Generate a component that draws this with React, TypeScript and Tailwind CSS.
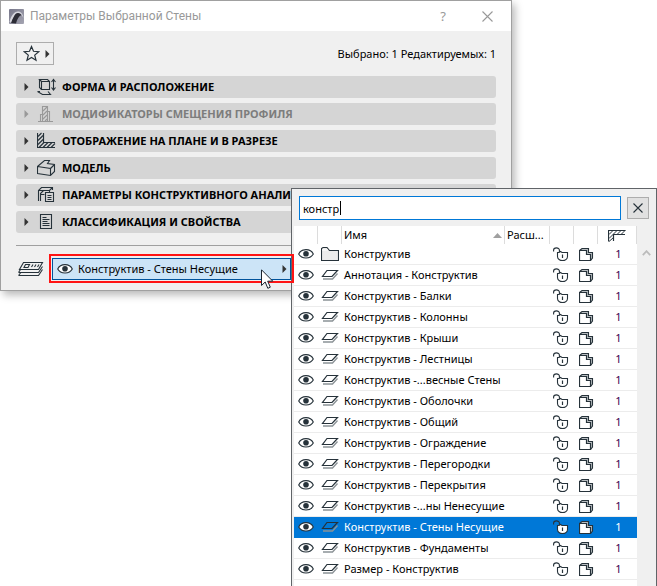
import type { ReactNode } from 'react';

const INK = '#26323a';

function Arrow({ className }: { className: string }) {
  return (
    <svg className={className} width="5" height="8" viewBox="0 0 5 8" fill="currentColor" aria-hidden="true">
      <path d="M0.500 0L4.500 4L0.500 8Z" />
    </svg>
  );
}

function AppLogo() {
  return (
    <svg width="15" height="15" viewBox="0 0 15 15" aria-hidden="true">
      <defs>
        <linearGradient id="logo" x1="0" y1="0" x2="1" y2="1">
          <stop offset="0" stopColor="#77778a" />
          <stop offset="1" stopColor="#a5a5b2" />
        </linearGradient>
      </defs>
      <rect width="15" height="15" rx="1" fill="url(#logo)" />
      <path d="M0.500 13C2 7 5 2.500 9 2.500C12 2.500 14 5 14.500 9C12.500 5 11 4 9 4C6 4 4 9 2.500 14Z" fill="#d6d6de" />
      <path d="M2 14C4 9 6 4 9 4C10.500 4 11.500 5 12.500 6C10 7 8 10 7 14.500Z" fill="#2c2c36" />
    </svg>
  );
}

function Star() {
  return (
    <svg width="17" height="17" viewBox="0 0 17 17" fill="none" stroke={INK} strokeWidth="1.200" strokeLinejoin="miter" aria-hidden="true">
      <path d="M8.500 1.500L10.500 6.300L15.700 6.700L11.700 10.100L13 15.200L8.500 12.400L4 15.200L5.300 10.100L1.300 6.700L6.500 6.300Z" />
    </svg>
  );
}

function Frame18({ children }: { children: ReactNode }) {
  return (
    <svg className="shrink-0" width="20" height="18" viewBox="0 0 20 18" fill="none" stroke="currentColor" strokeWidth="1.100" aria-hidden="true">
      {children}
    </svg>
  );
}

const shapeIcon = (
  <Frame18>
    <path d="M4.500 3.500H12.500V11.500H4.500ZM4.500 3.500L2.500 1.500H10.500L12.500 3.500M2.500 1.500V9.500L4.500 11.500" />
    <path d="M0.500 13.500H3M11 13.500L13.500 16.500H5.500L0.500 13.500" />
    <path d="M16.500 2V12M14.500 4L16.500 1.500L18.500 4M14.500 9.500L16.500 12L18.500 9.500" />
  </Frame18>
);
const profileIcon = (
  <Frame18>
    <path d="M5.500 16V1.500H10.500V16M3.500 16V9.500H5.500M10.500 6.500H12.500V16M1 16.500H16M6 6L10 2M6 10L10 6M6 14L10 10M8 16L10 14" />
  </Frame18>
);
const planIcon = (
  <Frame18>
    <path d="M0.500 1V15.500H18M6.500 1V10.500H18" strokeWidth="1.200" />
    <path d="M1 4.500L4.500 1M1 8.500L6 3.500M1 12.500L6 7.500M2 15.500L7 10.500M6 15.500L11 10.500M10 15.500L15 10.500M14 15.500L18 11.500" />
  </Frame18>
);
const modelIcon = (
  <Frame18>
    <path d="M0.500 7.500L7.500 1.500L12.500 1.500L10.500 4.500L17.500 5.500V12.500L13.500 16.500L0.500 14.500ZM0.500 7.500L13.500 9.500V16.500M13.500 9.500L17.500 5.500" />
  </Frame18>
);
const analysisIcon = (
  <Frame18>
    <path d="M1.500 15V4.500L4.500 1.500H15.500V4M1.500 4.500H12.500L15.500 1.500M3.500 15V7.500L6.500 4.500M3.500 8.500H7.500M12.500 4.500V6" />
    <path d="M8.500 6.500H16.500V15.500H8.500ZM10.500 9.500H14.500M10.500 11.500H14.500M10.500 13.500H14.500" />
  </Frame18>
);
const classIcon = (
  <Frame18>
    <path d="M3.500 1.500H14.500V15.500H3.500ZM5.500 4.500H9.500M5.500 6.500H12.500M5.500 8.500H10.500M5.500 10.500H12.500M5.500 12.500H12.500" />
  </Frame18>
);

const sections = [
  { title: 'ФОРМА И РАСПОЛОЖЕНИЕ', icon: shapeIcon, disabled: false },
  { title: 'МОДИФИКАТОРЫ СМЕЩЕНИЯ ПРОФИЛЯ', icon: profileIcon, disabled: true },
  { title: 'ОТОБРАЖЕНИЕ НА ПЛАНЕ И В РАЗРЕЗЕ', icon: planIcon, disabled: false },
  { title: 'МОДЕЛЬ', icon: modelIcon, disabled: false },
  { title: 'ПАРАМЕТРЫ КОНСТРУКТИВНОГО АНАЛИЗА', icon: analysisIcon, disabled: false },
  { title: 'КЛАССИФИКАЦИЯ И СВОЙСТВА', icon: classIcon, disabled: false },
];

function Eye() {
  return (
    <svg className="mx-auto block shrink-0" width="16" height="12" viewBox="0 0 16 12" aria-hidden="true">
      <path d="M0.700 6C3.500 0.200 12.500 0.200 15.300 6C12.500 11.300 3.500 11.300 0.700 6Z" fill="#fff" stroke={INK} strokeWidth="1.100" />
      <circle cx="8" cy="5.800" r="2.800" fill={INK} />
    </svg>
  );
}

function LayerIcon() {
  return (
    <svg className="mx-auto block" width="18" height="12" viewBox="0 0 18 12" fill="none" aria-hidden="true">
      <path d="M2 10H11.500L16.500 4.500" stroke="#8b9296" strokeWidth="1.400" />
      <path d="M6 1.500H16.500L11 7.500H1.500Z" stroke={INK} strokeWidth="1.200" />
    </svg>
  );
}

function FolderIcon() {
  return (
    <svg className="mx-auto block" width="18" height="16" viewBox="0 0 18 16" aria-hidden="true">
      <path d="M0.500 14.500V2.500L2 1.500H6L8.500 4.500H17.500V14.500Z" fill="#ececec" stroke={INK} strokeWidth="1.100" />
      <path d="M1 4H7" fill="none" stroke="#fff" />
    </svg>
  );
}

function LockIcon() {
  return (
    <svg className="block" width="16" height="15" viewBox="0 0 16 15" aria-hidden="true">
      <path d="M0.600 4.500V3C0.600 0.200 6.400 0.200 6.400 3V5" fill="none" stroke={INK} strokeWidth="1.100" />
      <path d="M4.500 5.500H6L7.500 4.500L9 5.500H14.500V9.500C14.500 12 12 13.500 9.500 13.500C7 13.500 4.500 12 4.500 9.500Z" fill="#fff" stroke={INK} strokeWidth="1.100" />
      <path d="M9.500 7.500V11" stroke={INK} strokeWidth="1.200" />
    </svg>
  );
}

function SolidIcon() {
  return (
    <svg className="mx-auto block" width="15" height="14" viewBox="0 0 15 14" stroke={INK} aria-hidden="true">
      <path d="M0.500 3.500L3 1.500H9.500V5.500H13.500V11L11.500 13.500H0.500Z" fill="#b9bec1" strokeWidth="1.100" />
      <path d="M0.500 3.500H7.500V7.500H11.500V13.500H0.500Z" fill="#fff" strokeWidth="1.200" />
    </svg>
  );
}

function JoinIcon() {
  return (
    <svg className="mx-auto block" width="18" height="13" viewBox="0 0 18 13" fill="none" stroke={INK} aria-hidden="true">
      <path d="M0.500 12.500V1.500H17.500M17 5.500H5.500V12" strokeWidth="1.200" />
      <path d="M1 5.500L5 1.500M1 9.500L9 1.500M1 12.500L5.500 8.500M9 5.500L13 1.500M13 5.500L17 1.500" />
    </svg>
  );
}

function StackIcon() {
  return (
    <svg className="shrink-0" width="26" height="16" viewBox="0 0 26 16" fill="none" stroke={INK} strokeWidth="1.100" aria-hidden="true">
      <path d="M5.500 1.500H24.500L20.500 8.500H1.500Z" />
      <path d="M0.500 11.500H20.500L24.500 5.500M0.500 14.500H20.500L24.500 8.500M2.500 8.500L0.500 11.500M2.500 12L0.500 14.500M7.500 3.500H11.500L10 6.500H6ZM13.500 6L15 3.500M16.500 6L18 3.500M19.500 6L21 3.500" />
    </svg>
  );
}

const layers = [
  'Конструктив',
  'Аннотация - Конструктив',
  'Конструктив - Балки',
  'Конструктив - Колонны',
  'Конструктив - Крыши',
  'Конструктив - Лестницы',
  'Конструктив -...весные Стены',
  'Конструктив - Оболочки',
  'Конструктив - Общий',
  'Конструктив - Ограждение',
  'Конструктив - Перегородки',
  'Конструктив - Перекрытия',
  'Конструктив -...ны Ненесущие',
  'Конструктив - Стены Несущие',
  'Конструктив - Фундаменты',
  'Размер - Конструктив',
];
const SELECTED = 13;

function SettingsDialog() {
  return (
    <section className="absolute left-0 top-0 w-[512px] border border-[#a0a0a0] bg-[#f0f0f0] shadow-[3px_4px_8px_rgba(0,0,0,0.28)]">
      <header className="flex h-[30px] items-center bg-white pl-2 pr-4 text-[#999]">
        <AppLogo />
        <h1 className="ml-1.5 font-['Roboto','Noto_Sans',sans-serif] text-[12px] leading-4">Параметры Выбранной Стены</h1>
        <button aria-label="Справка" className="ml-auto w-4 text-[13px] leading-4">?</button>
        <button aria-label="Закрыть" className="ml-7 flex w-4 justify-center">
          <svg width="11" height="11" viewBox="0 0 11 11" stroke="currentColor" strokeWidth="1.100" aria-hidden="true">
            <path d="M0.500 0.500L10.500 10.500M10.500 0.500L0.500 10.500" />
          </svg>
        </button>
      </header>
      <div className="px-[15px] pb-2 pt-[11px]">
        <div className="flex items-center justify-between">
          <button aria-label="Избранное" className="flex h-[23px] w-[38px] items-center justify-between border border-[#adadad] pl-1.5 pr-[3px] text-[#333]">
            <Star />
            <Arrow className="" />
          </button>
          <p>Выбрано: 1 Редактируемых: 1</p>
        </div>
        <div className="mt-[11px] flex flex-col gap-[5px]">
          {sections.map((s) => (
            <button
              key={s.title}
              disabled={s.disabled}
              className={`flex h-[22px] items-center rounded-[3px] bg-[#d5d5d5] pl-2 font-bold ${s.disabled ? 'text-[#7d7d7d]' : 'text-black'}`}
            >
              <Arrow className={s.disabled ? 'text-[#999]' : 'text-[#333]'} />
              <span className={`ml-2 mr-[5px] ${s.disabled ? 'text-[#999]' : 'text-[#26323a]'}`}>{s.icon}</span>
              <span className="whitespace-nowrap">{s.title}</span>
            </button>
          ))}
        </div>
        <hr className="mt-3 border-[#a0a0a0]" />
        <div className="mt-3 flex items-center gap-2 pb-0.5 pl-0.5">
          <StackIcon />
          <button className="flex h-[22px] w-[239px] items-center border border-[#00539c] bg-[#cce4f7] pl-1 pr-[3px]">
            <Eye />
            <span className="ml-[5px] flex-1 text-left">Конструктив - Стены Несущие</span>
            <Arrow className="text-[#333]" />
          </button>
        </div>
      </div>
    </section>
  );
}

function LayerPopup() {
  return (
    <section className="absolute bottom-0 left-[291px] right-0 top-[188px] flex flex-col border border-b-0 border-[#606468] bg-[#f0f0f0]">
      <div className="flex items-center gap-1.5 pb-1.5 pl-[7px] pr-[7px] pt-[7px]">
        <div className="relative flex-1">
          <input
            aria-label="Поиск слоя"
            defaultValue="констр"
            className="block h-6 w-full border border-[#0078d7] bg-white px-[3px] outline-none"
          />
          <span className="absolute left-[41px] top-[5px] h-3.5 w-px bg-black" />
        </div>
        <button aria-label="Очистить" className="flex h-[22px] w-[22px] items-center justify-center border border-[#adadad] bg-[#e1e1e1]">
          <svg width="10" height="10" viewBox="0 0 10 10" stroke={INK} strokeWidth="1.100" aria-hidden="true">
            <path d="M0.500 0.500L9.500 9.500M9.500 0.500L0.500 9.500" />
          </svg>
        </button>
      </div>
      <div className="flex flex-1 pl-0.5">
        <div className="flex-1 bg-white">
          <table className="w-full table-fixed border-separate border-spacing-0">
            <colgroup>
              <col className="w-6" />
              <col className="w-6" />
              <col />
              <col className="w-[45px]" />
              <col className="w-6" />
              <col className="w-6" />
              <col className="w-[39px]" />
            </colgroup>
            <thead>
              <tr className="h-[18px] text-left [&>th]:border-r [&>th]:border-[#dcdcdc] [&>th]:p-0 [&>th]:font-normal">
                <th />
                <th />
                <th>
                  <div className="flex items-center justify-between pl-0.5 pr-0.5">
                    Имя
                    <svg width="9" height="5" viewBox="0 0 9 5" fill="#a0a0a0" aria-hidden="true">
                      <path d="M4.500 0L9 5H0Z" />
                    </svg>
                  </div>
                </th>
                <th><div className="pl-0.5">Расш...</div></th>
                <th />
                <th />
                <th><JoinIcon /></th>
              </tr>
            </thead>
            <tbody>
              {layers.map((name, i) => (
                <tr
                  key={name}
                  className={`h-[21px] [&>td]:border-b [&>td]:p-0 ${i === SELECTED ? 'bg-[#0078d7] text-white [&>td]:border-[#0078d7]' : 'text-black [&>td]:border-[#ececec]'}`}
                >
                  <td><Eye /></td>
                  <td>{i === 0 ? <FolderIcon /> : <LayerIcon />}</td>
                  <td colSpan={2}><div className="whitespace-nowrap pl-0.5">{name}</div></td>
                  <td><div className="pl-[3px]"><LockIcon /></div></td>
                  <td><SolidIcon /></td>
                  <td><div className={`pl-0.5 text-center ${i === SELECTED ? '' : 'text-[#3c0050]'}`}>1</div></td>
                </tr>
              ))}
            </tbody>
          </table>
        </div>
        <div className="flex w-[19px] justify-center pt-6">
          <svg width="9" height="6" viewBox="0 0 9 6" fill="none" stroke="#bcbcbc" strokeWidth="1.800" aria-hidden="true">
            <path d="M0.800 5.200L4.500 1.200L8.200 5.200" />
          </svg>
        </div>
      </div>
    </section>
  );
}

export default function App() {
  return (
    <main className="relative h-screen overflow-hidden bg-white font-['Noto_Sans','Liberation_Sans',sans-serif] text-[11px] leading-4 text-black">
      <SettingsDialog />
      <LayerPopup />
      <div className="pointer-events-none absolute left-[49px] top-[254px] h-[29px] w-[245px] border-2 border-[#ff1414]" />
      <svg className="absolute left-[261px] top-[269px]" width="13" height="21" viewBox="0 0 13 21" aria-hidden="true">
        <path d="M0.500 0.800V16.500L4.200 13L6.800 19.300L9.300 18.200L6.700 12.200H11.800Z" fill="#fff" stroke="#1a2430" />
      </svg>
    </main>
  );
}
